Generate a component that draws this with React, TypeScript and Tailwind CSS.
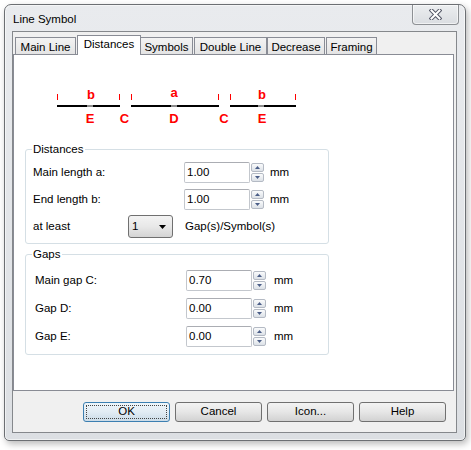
import React from "react";

type Tab = { label: string; cls: string; active?: boolean };

const tabs: Tab[] = [
  { label: "Main Line", cls: "ml-[2px] w-[61px]" },
  { label: "Distances", cls: "ml-[1px] w-[64px]", active: true },
  { label: "Symbols", cls: "-ml-px w-[53px]" },
  { label: "Double Line", cls: "ml-[1px] w-[73px]" },
  { label: "Decrease", cls: "ml-0 w-[58px]" },
  { label: "Framing", cls: "ml-[1px] w-[51px]" },
];

function TabStrip() {
  return (
    <div className="relative z-10 -mb-px flex h-[23px] items-end">
      {tabs.map((t) =>
        t.active ? (
          <div
            key={t.label}
            className={`${t.cls} flex h-[20px] justify-center border border-b-0 border-[#898c95] bg-white pt-[1px] leading-[15px]`}
          >
            {t.label}
          </div>
        ) : (
          <div
            key={t.label}
            className={`${t.cls} mb-[1px] flex h-[17px] justify-center border border-b-0 border-[#898c95] bg-gradient-to-b from-[#f3f3f3] to-[#e4e4e4] pt-[2px] leading-[15px]`}
          >
            {t.label}
          </div>
        )
      )}
    </div>
  );
}

function CloseButton() {
  return (
    <div className="flex h-[20px] w-[47px] items-center justify-center rounded-b-[4px] border border-t-0 border-[#8d9094] bg-gradient-to-b from-[#eceef0] to-[#dadde1] shadow-[inset_0_0_0_1px_rgba(255,255,255,0.6)]">
      <svg width="13" height="11" viewBox="0 0 13 11" className="block">
        <path d="M2.5 1.5L10.5 9.5M10.5 1.5L2.5 9.5" stroke="#535766" strokeWidth="4" strokeLinecap="square" />
        <path d="M2.5 1.5L10.5 9.5M10.5 1.5L2.5 9.5" stroke="#ffffff" strokeWidth="2" strokeLinecap="square" />
      </svg>
    </div>
  );
}

function SpinButton({ up }: { up?: boolean }) {
  return (
    <div className="flex h-[9px] w-[13px] items-center justify-center rounded-[2px] border border-[#b4bac4] bg-gradient-to-b from-[#fafbfc] to-[#dce1e7]">
      <svg width="5" height="3" viewBox="0 0 5 3" className="block">
        <path d={up ? "M2.5 0L5 3H0Z" : "M0 0H5L2.5 3Z"} fill="#4a5d87" />
      </svg>
    </div>
  );
}

function Spinner() {
  return (
    <div className="mt-[1px] flex flex-col gap-[1px] self-start">
      <SpinButton up />
      <SpinButton />
    </div>
  );
}

function NumberField({ value }: { value: string }) {
  return (
    <div className="flex h-[21px] w-[66px] items-center rounded-[2px] border border-[#c3c7cd] border-t-[#abadb3] bg-white pl-[2px]">
      {value}
    </div>
  );
}

function NumberRow({
  label,
  value,
  rowCls,
  labelCls,
  spinCls,
  unitCls,
}: {
  label: string;
  value: string;
  rowCls: string;
  labelCls: string;
  spinCls: string;
  unitCls: string;
}) {
  return (
    <div className={`flex h-[21px] items-center ${rowCls}`}>
      <span className={labelCls}>{label}</span>
      <NumberField value={value} />
      <div className={spinCls}>
        <Spinner />
      </div>
      <span className={unitCls}>mm</span>
    </div>
  );
}

function GroupBox({
  title,
  cls,
  children,
}: {
  title: string;
  cls: string;
  children: React.ReactNode;
}) {
  return (
    <div className={`ml-[11px] flex w-[304px] flex-col rounded-[3px] border border-[#d5dfe5] ${cls}`}>
      <span className="-mt-[8px] ml-[6px] w-fit bg-white px-px leading-[15px]">{title}</span>
      {children}
    </div>
  );
}

function Diagram() {
  const red = "#ff0000";
  const letter = {
    fill: red,
    fontSize: 13,
    fontWeight: 700,
    fontFamily: '"Liberation Sans", Arial, sans-serif',
    textAnchor: "middle" as const,
  };
  return (
    <svg width="439" height="94" viewBox="0 0 439 94" className="block">
      {/* line segments */}
      <rect x="43" y="50" width="63" height="2" fill="#000" />
      <rect x="117" y="50" width="88" height="2" fill="#000" />
      <rect x="216" y="50" width="66" height="2" fill="#000" />
      {/* gap markers on each segment */}
      <rect x="73" y="50" width="6" height="2" fill="#8c8c8c" />
      <rect x="157" y="50" width="6" height="2" fill="#8c8c8c" />
      <rect x="244" y="50" width="6" height="2" fill="#8c8c8c" />
      {/* end ticks */}
      {[43, 105, 117, 204, 216, 281].map((x) => (
        <rect key={x} x={x} y="39" width="1" height="6" fill={red} />
      ))}
      <text x="77" y="44" style={letter}>b</text>
      <text x="160" y="42" style={letter}>a</text>
      <text x="248" y="44" style={letter}>b</text>
      <text x="76" y="68" style={letter}>E</text>
      <text x="110.5" y="68" style={letter}>C</text>
      <text x="160" y="68" style={letter}>D</text>
      <text x="210" y="68" style={letter}>C</text>
      <text x="248" y="68" style={letter}>E</text>
    </svg>
  );
}

function DialogButton({ label, primary }: { label: string; primary?: boolean }) {
  if (primary) {
    return (
      <div className="flex h-[20px] w-[87px] rounded-[3px] border border-[#3c7fb1] bg-gradient-to-b from-[#eef5fa] via-[#e2ecf4] to-[#cbdbe7] p-[2px]">
        <div className="flex flex-1 items-center justify-center border border-dotted border-[#444]">
          {label}
        </div>
      </div>
    );
  }
  return (
    <div className="flex h-[20px] w-[87px] items-center justify-center rounded-[3px] border border-[#707070] bg-gradient-to-b from-[#f3f3f3] via-[#e6e6e6] to-[#d2d2d2]">
      {label}
    </div>
  );
}

export default function App() {
  return (
    <div className="relative h-[450px] w-[471px] overflow-hidden bg-white font-['Liberation_Sans',Arial,sans-serif] text-[11.5px] text-black">
      <div className="ml-[4px] mt-[4px] flex h-[437px] w-[462px] flex-col rounded-t-[7px] rounded-b-[5px] border border-[#6c6f73] bg-gradient-to-b from-[#e9ebee] to-[#dcdfe3] shadow-[inset_0_0_0_1px_rgba(255,255,255,0.55),2px_3px_7px_rgba(0,0,0,0.28)]">
        {/* title bar */}
        <div className="flex h-[26px] shrink-0 items-start justify-between pl-[8px] pr-[6px]">
          <span className="pt-[7px] leading-[15px]">Line Symbol</span>
          <CloseButton />
        </div>

        {/* client area */}
        <div className="ml-[7px] flex h-[402px] w-[445px] flex-col border border-[#85888c] bg-[#f0f0f0]">
          <TabStrip />

          <div className="relative h-[337px] w-[441px] border border-[#898c95] bg-white">
            <Diagram />

            <GroupBox title="Distances" cls="h-[95px]">
              <NumberRow
                label="Main length a:"
                value="1.00"
                rowCls="mt-[5px] pl-[7px]"
                labelCls="w-[151px]"
                spinCls="ml-[1px] flex h-[21px]"
                unitCls="ml-[6px]"
              />
              <NumberRow
                label="End length b:"
                value="1.00"
                rowCls="mt-[6px] pl-[7px]"
                labelCls="w-[151px]"
                spinCls="ml-[1px] flex h-[21px]"
                unitCls="ml-[6px]"
              />
              <div className="mt-[5px] flex h-[23px] items-center pl-[7px]">
                <span className="w-[95px]">at least</span>
                <div className="flex h-[23px] w-[45px] items-center justify-between rounded-[3px] border border-[#707070] bg-gradient-to-b from-[#f3f3f3] via-[#e8e8e8] to-[#d4d4d4] pl-[3px] pr-[6px]">
                  <span>1</span>
                  <svg width="7" height="4" viewBox="0 0 7 4" className="block">
                    <path d="M0 0H7L3.5 4Z" fill="#000" />
                  </svg>
                </div>
                <span className="ml-[12px]">Gap(s)/Symbol(s)</span>
              </div>
            </GroupBox>

            <GroupBox title="Gaps" cls="mt-[10px] h-[101px]">
              <NumberRow
                label="Main gap C:"
                value="0.70"
                rowCls="mt-[8px] pl-[9px]"
                labelCls="w-[151px]"
                spinCls="ml-[1px] flex h-[21px]"
                unitCls="ml-[8px]"
              />
              <NumberRow
                label="Gap D:"
                value="0.00"
                rowCls="mt-[7px] pl-[9px]"
                labelCls="w-[151px]"
                spinCls="ml-[1px] flex h-[21px]"
                unitCls="ml-[8px]"
              />
              <NumberRow
                label="Gap E:"
                value="0.00"
                rowCls="mt-[7px] pl-[9px]"
                labelCls="w-[151px]"
                spinCls="ml-[1px] flex h-[21px]"
                unitCls="ml-[8px]"
              />
            </GroupBox>
          </div>

          <div className="mt-[11px] flex justify-end gap-[5px] pr-[10px]">
            <DialogButton label="OK" primary />
            <DialogButton label="Cancel" />
            <DialogButton label="Icon..." />
            <DialogButton label="Help" />
          </div>
        </div>
      </div>
    </div>
  );
}
